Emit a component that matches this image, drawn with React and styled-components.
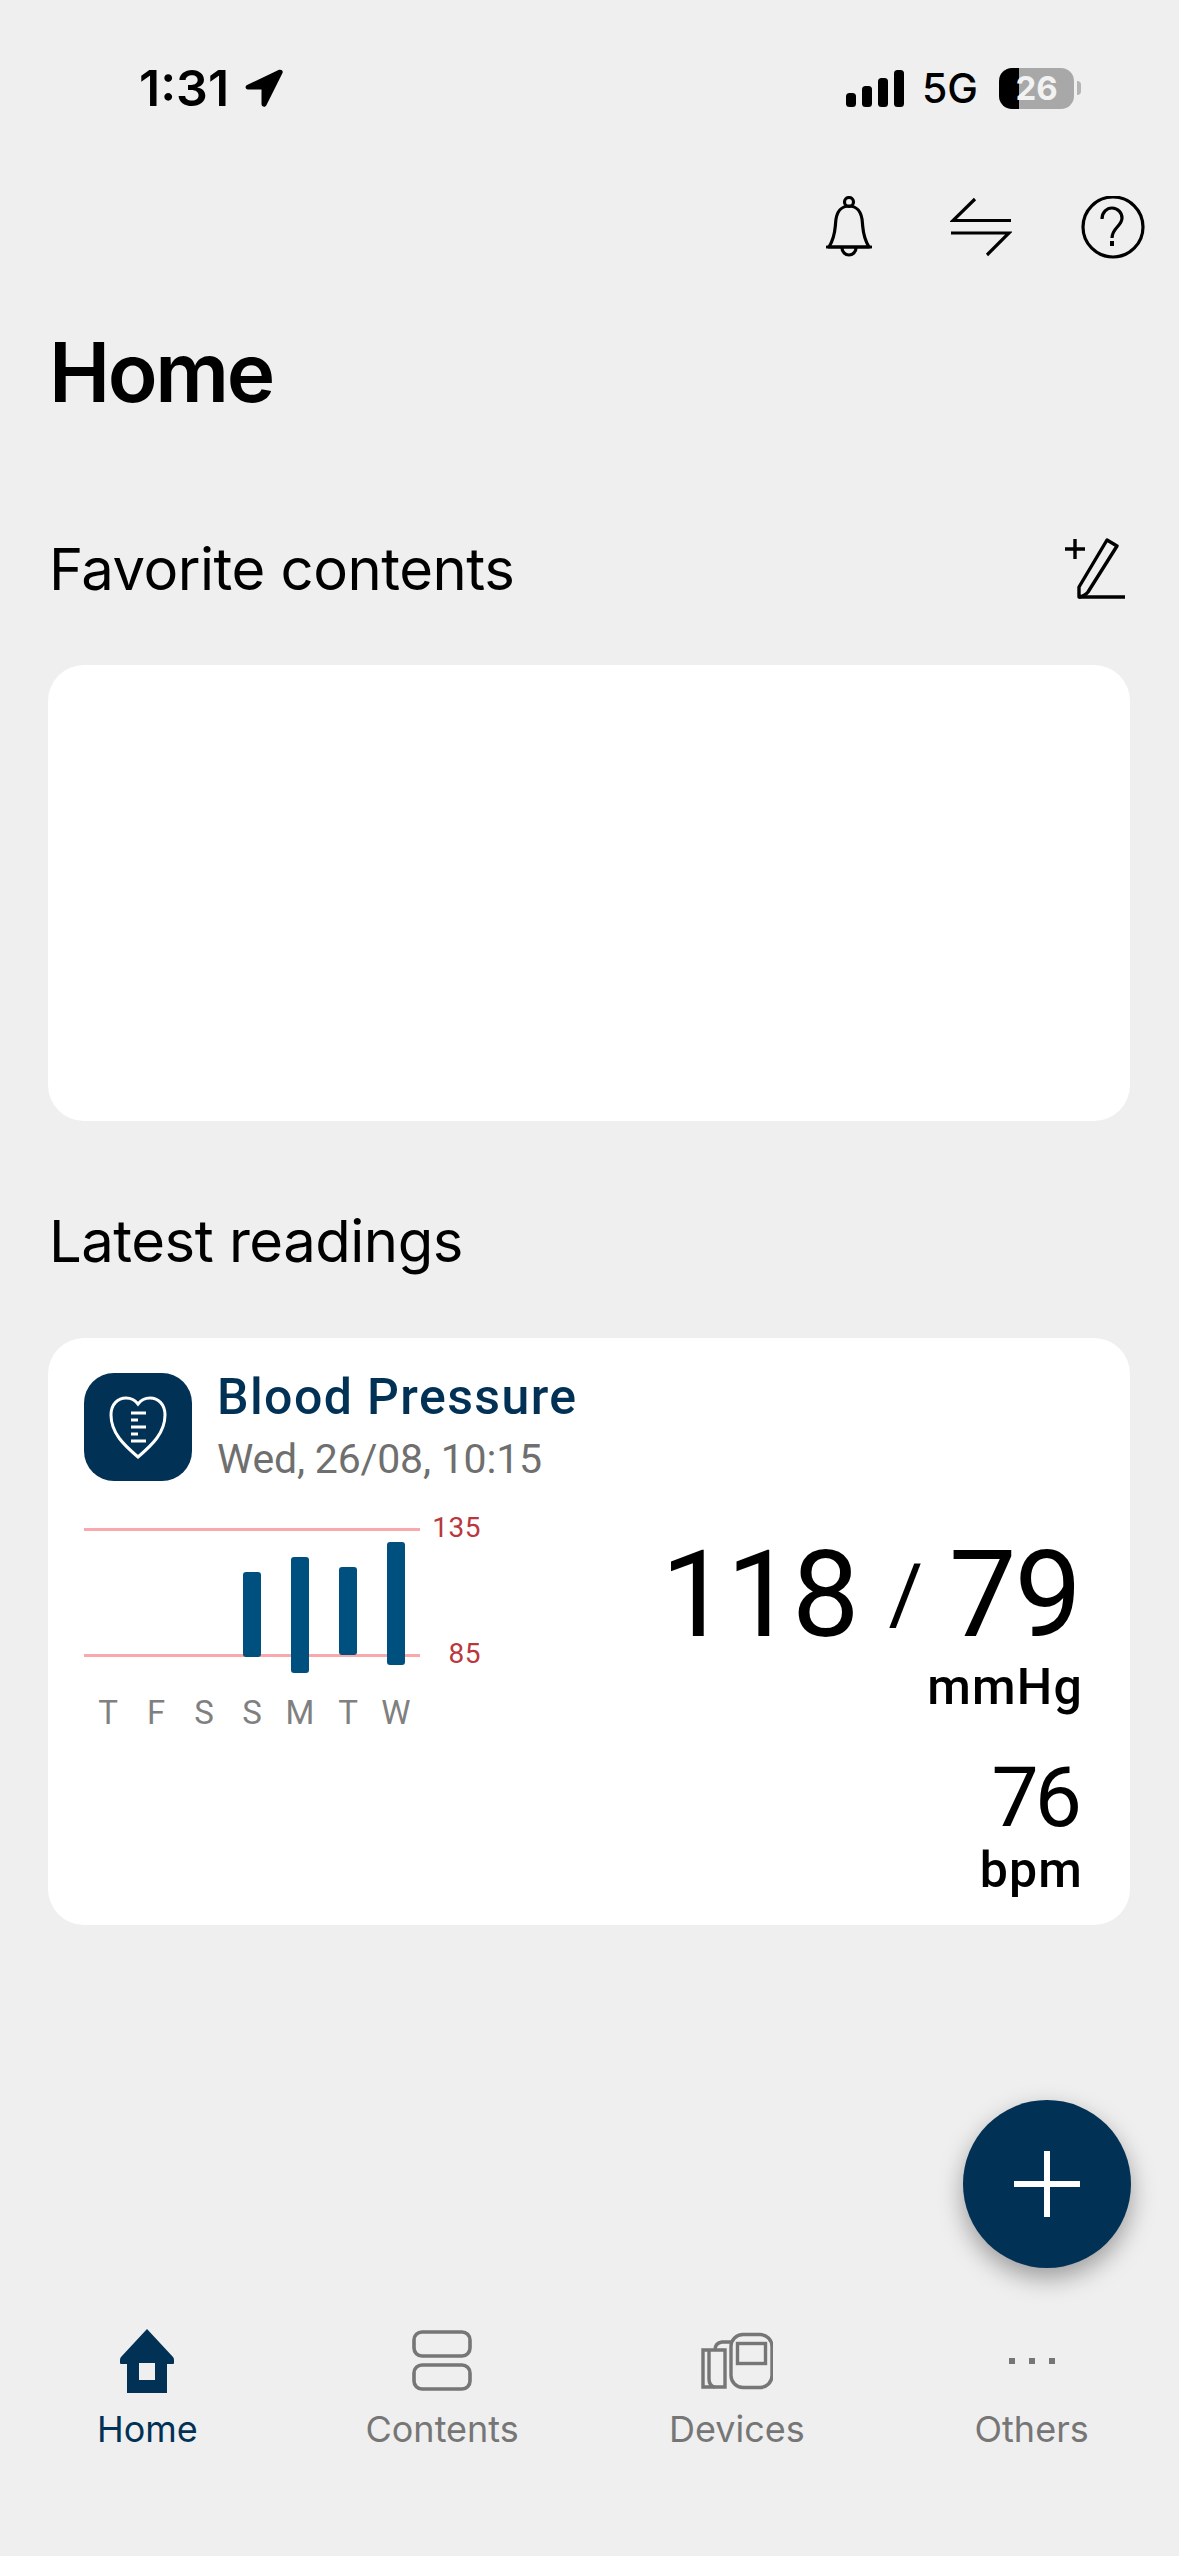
import React from "react";
import styled, { createGlobalStyle } from "styled-components";

const NAVY = "#023156";
const GREY = "#767676";

const GlobalStyle = createGlobalStyle`
  html, body {
    margin: 0;
    padding: 0;
    background: #efefef;
  }
`;

const Page = styled.div`
  position: relative;
  display: flex;
  flex-direction: column;
  width: 1179px;
  height: 2556px;
  overflow: hidden;
  background: #efefef;
  color: #000;
  font-family: Inter, "Liberation Sans", sans-serif;
`;

const StatusBar = styled.div`
  display: flex;
  justify-content: space-between;
  align-items: center;
  height: 176px;
  padding: 0 105px 0 139px;
  box-sizing: border-box;
`;

const StatusGroup = styled.div`
  display: flex;
  align-items: center;
  gap: ${props => props.$gap}px;
`;

const Clock = styled.span`
  font-size: 50px;
  font-weight: 600;
  line-height: 60px;
`;

const Network = styled.span`
  margin-right: 3px;
  font-size: 41px;
  font-weight: 500;
  line-height: 50px;
`;

const Battery = styled.div`
  position: relative;
  display: flex;
  align-items: center;
  justify-content: center;
  width: 75px;
  height: 41px;
  border-radius: 13px;
  background: linear-gradient(90deg, #000 27%, #a8a8a8 27%);
  color: #f2f2f2;
  font-size: 33px;
  font-weight: 700;

  &::after {
    content: "";
    position: absolute;
    right: -7px;
    top: 13px;
    width: 4px;
    height: 14px;
    border-radius: 0 6px 6px 0;
    background: #b4b4b4;
  }
`;

const HeaderIcons = styled.div`
  display: flex;
  justify-content: flex-end;
  height: 62px;
  padding-top: 20px;
`;

const IconSlot = styled.div`
  display: flex;
  justify-content: center;
  width: 132px;
`;

const Title = styled.h1`
  margin: 65px 0 0 49px;
  font-size: 82px;
  font-weight: 600;
  line-height: 100px;
  letter-spacing: -2.4px;
`;

const SectionHead = styled.div`
  display: flex;
  justify-content: space-between;
  align-items: center;
  margin-top: ${props => props.$top}px;
  padding: 0 53px 0 49px;
  height: 70px;
`;

const SectionTitle = styled.h2`
  margin: 0;
  font-size: 58px;
  font-weight: 400;
  line-height: 70px;
  letter-spacing: -0.5px;
`;

const Card = styled.div`
  box-sizing: border-box;
  margin: ${props => props.$top}px 49px 0 48px;
  height: ${props => props.$height}px;
  border-radius: 36px;
  background: #fff;
`;

const ReadingCard = styled(Card)`
  padding: 35px 50px 0 36px;
`;

const ReadingHead = styled.div`
  display: flex;
  gap: 25px;
`;

const AppIcon = styled.div`
  width: 108px;
  height: 108px;
  border-radius: 30px;
  background: ${NAVY};
`;

const ReadingInfo = styled.div`
  display: flex;
  flex-direction: column;
  gap: 18px;
  padding-top: 2px;
`;

const ReadingName = styled.div`
  color: ${NAVY};
  font-family: Roboto, sans-serif;
  font-size: 50px;
  font-weight: 500;
  line-height: 44px;
  letter-spacing: 1.4px;
`;

const ReadingDate = styled.div`
  color: #6f6f6f;
  font-family: Roboto, sans-serif;
  font-size: 41px;
  line-height: 44px;
  letter-spacing: -0.2px;
`;

const ReadingBody = styled.div`
  display: flex;
  justify-content: space-between;
  margin-top: 30px;
`;

const Chart = styled.div`
  width: 400px;
`;

const Plot = styled.div`
  position: relative;
  height: 182px;

  svg {
    display: block;
  }
`;

const Limit = styled.span`
  position: absolute;
  right: 3px;
  top: ${props => props.$top}px;
  color: #b9383e;
  font-family: Roboto, sans-serif;
  font-size: 28px;
  line-height: 28px;
  letter-spacing: 0.5px;
`;

const Days = styled.div`
  display: grid;
  grid-template-columns: repeat(7, 48px);
`;

const Day = styled.span`
  color: #808080;
  font-family: Roboto, sans-serif;
  font-size: 33px;
  line-height: 40px;
  text-align: center;
`;

const Values = styled.div`
  display: flex;
  flex-direction: column;
  align-items: flex-end;
  padding-top: 24px;
  font-family: Roboto, sans-serif;
`;

const Pressure = styled.div`
  display: flex;
  align-items: center;
  font-size: 120px;
  font-weight: 400;
  line-height: 120px;
  letter-spacing: -2px;
`;

const Slash = styled.span`
  margin: 0 26px 0 31px;
  font-size: 84px;
  letter-spacing: 0;
`;

const Unit = styled.div`
  margin: ${props => props.$top}px -3px 0 0;
  font-size: 50px;
  font-weight: 500;
  line-height: 50px;
  letter-spacing: 1.2px;
`;

const Pulse = styled.div`
  margin: 41px 2px 0 0;
  font-size: 84px;
  line-height: 90px;
  letter-spacing: -4px;
`;

const BottomNav = styled.nav`
  display: grid;
  grid-template-columns: repeat(4, 1fr);
  margin-top: auto;
  padding-bottom: 102px;
`;

const NavItem = styled.div`
  display: flex;
  flex-direction: column;
  align-items: center;
  gap: 11px;
  color: ${props => (props.$active ? NAVY : GREY)};
  font-size: 36px;
  line-height: 50px;

  svg {
    display: block;
  }
`;

const Fab = styled.button`
  position: absolute;
  left: 963px;
  top: 2100px;
  display: flex;
  align-items: center;
  justify-content: center;
  width: 168px;
  height: 168px;
  padding: 0;
  border: 0;
  border-radius: 50%;
  background: ${NAVY};
  box-shadow: 0 10px 24px rgba(0, 0, 0, 0.35);
`;

const SignalIcon = () => (
  <svg width="58" height="37" viewBox="0 0 58 37">
    <rect x="0" y="23" width="10" height="14" rx="3.5" />
    <rect x="16" y="16" width="10" height="21" rx="3.5" />
    <rect x="32" y="8" width="10" height="29" rx="3.5" />
    <rect x="48" y="0" width="10" height="37" rx="3.5" />
  </svg>
);

const LocationIcon = () => (
  <svg width="40" height="40" viewBox="0 0 40 40">
    <path d="M37.5 5C38.5 2.5 36 1 33.5 2L2 17C-.5 18.5.5 21.5 3 21.5H16.5V36C16.5 39 20.5 40 21.5 37Z" />
  </svg>
);

const BellIcon = () => (
  <svg width="46" height="62" viewBox="0 0 46 62" fill="none" stroke="#000" strokeWidth="3.2">
    <circle cx="23" cy="6" r="4.5" />
    <path d="M3 51C9 41 9 33 9.500 28C10 15 16 10 23 10C30 10 36 15 36.500 28C37 33 37 41 43 51Z" strokeLinejoin="round" />
    <path d="M1 51H45" strokeLinecap="round" />
    <path d="M16 52A7 7 0 0 0 30 52" />
  </svg>
);

const SwapIcon = () => (
  <svg width="62" height="62" viewBox="0 0 62 62" fill="none" stroke="#000" strokeWidth="3.2">
    <path d="M25 3L3 24.500H61" />
    <path d="M1 37H59L37 59" />
  </svg>
);

const HelpIcon = () => (
  <svg width="64" height="64" viewBox="0 0 64 64" fill="none" stroke="#000" strokeWidth="3.2">
    <circle cx="32" cy="31" r="30" />
    <path d="M21 23C21 16 26 12 31 12C37 12 41 17 41 22C41 30 31 32 31 42" />
    <rect x="29" y="45" width="4" height="5" fill="#000" stroke="none" />
  </svg>
);

const AddFavoriteIcon = () => (
  <svg width="62" height="62" viewBox="0 0 62 62" fill="none" stroke="#000" strokeWidth="3.4">
    <path d="M1 11H21M11 1V21" />
    <path d="M43 2L53 8L24 54Q21 58 15 59V49Z" strokeLinejoin="round" />
    <path d="M15 59H61" />
  </svg>
);

const HeartIcon = () => (
  <svg width="108" height="108" viewBox="0 0 108 108" fill="none" stroke="#fff" strokeWidth="3">
    <path d="M54 84C40 72 27 60 27 42C27 31 34 25 42 25C47 25 51 27 54 31C57 27 61 25 66 25C74 25 81 31 81 42C81 60 68 72 54 84Z" />
    <path d="M47 40H62M47 47H54M47 54H62M47 61H54M47 68H62" />
  </svg>
);

const bars = [
  { x: 159, top: 61, height: 85 },
  { x: 207, top: 46, height: 116 },
  { x: 255, top: 56, height: 88 },
  { x: 303, top: 31, height: 123 }
];

const BarChart = () => (
  <svg width="340" height="180" viewBox="0 0 340 180">
    <rect x="0" y="17" width="336" height="3" fill="#f9a8ab" />
    <rect x="0" y="143" width="336" height="3" fill="#f9a8ab" />
    {bars.map(bar => (
      <rect key={bar.x} x={bar.x} y={bar.top} width="18" height={bar.height} rx="3" fill="#00507f" />
    ))}
  </svg>
);

const HomeIcon = () => (
  <svg width="54" height="64" viewBox="0 0 54 64" fill={NAVY}>
    <path
      fillRule="evenodd"
      d="M27 0L53 28Q54 29 54 31V34Q54 35 53 35H47V64H7V35H1Q0 35 0 34V31Q0 29 1 28ZM19 34V51H35V34Z"
    />
  </svg>
);

const ContentsIcon = () => (
  <svg width="60" height="64" viewBox="0 0 60 64" fill="none" stroke={GREY} strokeWidth="3.6">
    <rect x="2" y="3" width="56" height="24" rx="8" />
    <rect x="2" y="36" width="56" height="24" rx="8" />
  </svg>
);

const DevicesIcon = () => (
  <svg width="72" height="64" viewBox="0 0 72 64" fill="none" stroke={GREY} strokeWidth="3.4">
    <rect x="30" y="5.500" width="41" height="53" rx="12" />
    <rect x="36.500" y="14.500" width="28" height="20" />
    <path d="M2 21H24V58H2Z" />
    <path d="M8 22V50Q8 57 14 58" />
    <path d="M14 21Q14 14 21 13H31" />
  </svg>
);

const OthersIcon = () => (
  <svg width="46" height="64" viewBox="0 0 46 64" fill={GREY}>
    <rect x="0" y="29" width="6" height="6" />
    <rect x="20" y="29" width="6" height="6" />
    <rect x="40" y="29" width="6" height="6" />
  </svg>
);

const PlusIcon = () => (
  <svg width="66" height="66" viewBox="0 0 66 66" fill="#fff">
    <rect x="0" y="30" width="66" height="6" />
    <rect x="30" y="0" width="6" height="66" />
  </svg>
);

const navItems = [
  { label: "Home", icon: <HomeIcon />, active: true },
  { label: "Contents", icon: <ContentsIcon /> },
  { label: "Devices", icon: <DevicesIcon /> },
  { label: "Others", icon: <OthersIcon /> }
];

const days = ["T", "F", "S", "S", "M", "T", "W"];

const App = () => (
  <Page>
    <GlobalStyle />

    <StatusBar>
      <StatusGroup $gap={16}>
        <Clock>1:31</Clock>
        <LocationIcon />
      </StatusGroup>
      <StatusGroup $gap={18}>
        <SignalIcon />
        <Network>5G</Network>
        <Battery>26</Battery>
      </StatusGroup>
    </StatusBar>

    <HeaderIcons>
      <IconSlot><BellIcon /></IconSlot>
      <IconSlot><SwapIcon /></IconSlot>
      <IconSlot><HelpIcon /></IconSlot>
    </HeaderIcons>

    <Title>Home</Title>

    <SectionHead $top={111}>
      <SectionTitle>Favorite contents</SectionTitle>
      <AddFavoriteIcon />
    </SectionHead>
    <Card $top={61} $height={456} />

    <SectionHead $top={85}>
      <SectionTitle>Latest readings</SectionTitle>
    </SectionHead>
    <ReadingCard $top={62} $height={587}>
      <ReadingHead>
        <AppIcon><HeartIcon /></AppIcon>
        <ReadingInfo>
          <ReadingName>Blood Pressure</ReadingName>
          <ReadingDate>Wed, 26/08, 10:15</ReadingDate>
        </ReadingInfo>
      </ReadingHead>

      <ReadingBody>
        <Chart>
          <Plot>
            <BarChart />
            <Limit $top={3}>135</Limit>
            <Limit $top={129}>85</Limit>
          </Plot>
          <Days>
            {days.map((day, index) => (
              <Day key={index}>{day}</Day>
            ))}
          </Days>
        </Chart>

        <Values>
          <Pressure>
            118<Slash>/</Slash>79
          </Pressure>
          <Unit $top={7}>mmHg</Unit>
          <Pulse>76</Pulse>
          <Unit $top={2}>bpm</Unit>
        </Values>
      </ReadingBody>
    </ReadingCard>

    <BottomNav>
      {navItems.map(item => (
        <NavItem key={item.label} $active={item.active}>
          {item.icon}
          {item.label}
        </NavItem>
      ))}
    </BottomNav>

    <Fab aria-label="Add">
      <PlusIcon />
    </Fab>
  </Page>
);

export default App;
